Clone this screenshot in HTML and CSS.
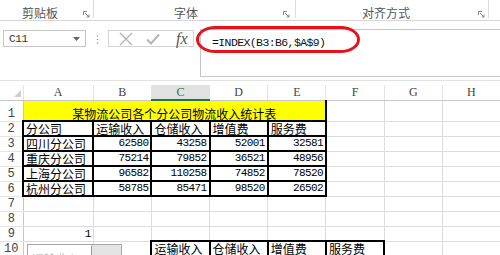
FILE: index.html
```html
<!DOCTYPE html>
<html lang="zh-CN">
<head>
    <meta charset="UTF-8">
    <title>INDEX</title>
    <link rel="stylesheet" href="styles.css">
</head>
<body>
    <div class="ribbon">
        <div class="group clip">
            <span class="label">剪贴板</span>
            <svg class="launcher" width="7" height="7" viewBox="0 0 7 7"><path d="M0.5 4V0.5H4M2 2L6 6M3.5 6H6V3.5" fill="none" stroke="#888" stroke-width="1"/></svg>
        </div>
        <div class="group font">
            <span class="label">字体</span>
            <svg class="launcher" width="7" height="7" viewBox="0 0 7 7"><path d="M0.5 4V0.5H4M2 2L6 6M3.5 6H6V3.5" fill="none" stroke="#888" stroke-width="1"/></svg>
        </div>
        <div class="group align">
            <span class="label">对齐方式</span>
            <svg class="launcher" width="7" height="7" viewBox="0 0 7 7"><path d="M0.5 4V0.5H4M2 2L6 6M3.5 6H6V3.5" fill="none" stroke="#888" stroke-width="1"/></svg>
        </div>
    </div>

    <div class="formula-bar">
        <div class="name-box">
            <span>C11</span>
            <svg width="7" height="4" viewBox="0 0 7 4"><path d="M0 0H7L3.5 4Z" fill="#666"/></svg>
        </div>
        <svg class="grip" width="3" height="9" viewBox="0 0 3 9"><circle cx="1.5" cy="1" r="0.8" fill="#999"/><circle cx="1.5" cy="4.5" r="0.8" fill="#999"/><circle cx="1.5" cy="8" r="0.8" fill="#999"/></svg>
        <div class="fx-buttons">
            <svg width="14" height="14" viewBox="0 0 14 14"><path d="M1 1L13 13M13 1L1 13" stroke="#b4b4b4" stroke-width="1.4"/></svg>
            <svg width="14" height="14" viewBox="0 0 14 14"><path d="M1 7.5L5 11.5L13 2.5" fill="none" stroke="#b4b4b4" stroke-width="2"/></svg>
            <span class="fx">fx</span>
        </div>
        <div class="formula-input">
            <span class="formula">=INDEX(B3:B6,$A$9)</span>
            <div class="mark"></div>
        </div>
    </div>

    <div class="sheet-wrap">
        <table class="sheet">
            <colgroup>
                <col class="c-head"><col class="c-a"><col class="c-n"><col class="c-n"><col class="c-n"><col class="c-n"><col class="c-n"><col class="c-n"><col class="c-n">
            </colgroup>
            <tr class="heads">
                <th class="corner"><svg width="7" height="7" viewBox="0 0 7 7"><path d="M7 0V7H0Z" fill="#cfcfcf"/></svg></th>
                <th>A</th><th>B</th><th class="sel">C</th><th>D</th><th>E</th><th>F</th><th>G</th><th>H</th>
            </tr>
            <tr class="r1">
                <th class="rn">1</th>
                <td colspan="5" class="title">某物流公司各个分公司物流收入统计表</td>
                <td></td><td></td><td></td>
            </tr>
            <tr>
                <th class="rn">2</th>
                <td class="b">分公司</td><td class="b">运输收入</td><td class="b">仓储收入</td><td class="b">增值费</td><td class="b">服务费</td>
                <td></td><td></td><td></td>
            </tr>
            <tr>
                <th class="rn">3</th>
                <td class="b">四川分公司</td><td class="b n">62580</td><td class="b n">43258</td><td class="b n">52001</td><td class="b n">32581</td>
                <td></td><td></td><td></td>
            </tr>
            <tr>
                <th class="rn">4</th>
                <td class="b">重庆分公司</td><td class="b n">75214</td><td class="b n">79852</td><td class="b n">36521</td><td class="b n">48956</td>
                <td></td><td></td><td></td>
            </tr>
            <tr>
                <th class="rn">5</th>
                <td class="b">上海分公司</td><td class="b n">96582</td><td class="b n">110258</td><td class="b n">74852</td><td class="b n">78520</td>
                <td></td><td></td><td></td>
            </tr>
            <tr>
                <th class="rn">6</th>
                <td class="b">杭州分公司</td><td class="b n">58785</td><td class="b n">85471</td><td class="b n">98520</td><td class="b n">26502</td>
                <td></td><td></td><td></td>
            </tr>
            <tr>
                <th class="rn">7</th>
                <td></td><td></td><td></td><td></td><td></td><td></td><td></td><td></td>
            </tr>
            <tr>
                <th class="rn">8</th>
                <td></td><td></td><td></td><td></td><td></td><td></td><td></td><td></td>
            </tr>
            <tr>
                <th class="rn">9</th>
                <td class="n">1</td><td></td><td></td><td></td><td></td><td></td><td></td><td></td>
            </tr>
            <tr>
                <th class="rn">10</th>
                <td></td><td></td><td class="b">运输收入</td><td class="b">仓储收入</td><td class="b">增值费</td><td class="b">服务费</td><td></td><td></td>
            </tr>
        </table>

        <!-- combo box form control sitting over A10:B10 -->
        <div class="combo">
            <div class="combo-text">运输收入</div>
            <div class="combo-btn"></div>
        </div>
    </div>
</body>
</html>
```

FILE: styles.css
```css
body {
    margin: 0;
    width: 500px;
    height: 255px;
    overflow: hidden;
    background-color: #fff;
    font-family: "Noto Sans CJK SC", sans-serif;
    color: #000;
}
.ribbon {
    display: flex;
    height: 20px;
    border-bottom: 1px solid #d6d6d6;
}
.group {
    display: flex;
    align-items: flex-start;
    height: 18px;
    font-size: 12px;
    color: #555;
    border-right: 1px solid #dcdcdc;
}
.group .label {
    line-height: 14px;
    padding-top: 6px;
}
.group .launcher {
    margin-left: auto;
    margin-top: 11px;
}
.clip {
    width: 94px;
    padding-left: 22px;
    box-sizing: border-box;
}
.clip .launcher {
    margin-right: 3px;
}
.font {
    width: 202px;
    padding-left: 80px;
    box-sizing: border-box;
}
.font .launcher {
    margin-right: 5px;
}
.align {
    width: 193px;
    padding-left: 66px;
    box-sizing: border-box;
}
.align .launcher {
    margin-right: 3px;
}
.formula-bar {
    display: flex;
    align-items: flex-start;
    height: 59px;
    border-bottom: 1px solid #e2e2e2;
}
.name-box {
    display: flex;
    align-items: center;
    justify-content: space-between;
    box-sizing: border-box;
    width: 83px;
    height: 17px;
    margin: 9px 0 0 3px;
    padding: 0 5px 0 5px;
    border: 1px solid #c6c6c6;
    font-family: "Liberation Mono", monospace;
    font-size: 11px;
    letter-spacing: -0.4px;
    color: #333;
}
.grip {
    margin: 14px 0 0 10px;
}
.fx-buttons {
    display: flex;
    align-items: center;
    box-sizing: border-box;
    width: 86px;
    height: 17px;
    margin: 9px 0 0 9px;
    padding-left: 10px;
    gap: 13px;
    border: 1px solid #d4d4d4;
}
.fx {
    font-family: "Liberation Serif", serif;
    font-style: italic;
    font-size: 16px;
    line-height: 15px;
    color: #555;
    margin-left: 3px;
}
.formula-input {
    position: relative;
    flex: 1;
    box-sizing: border-box;
    height: 48px;
    margin: 8px 0 0 6px;
    padding: 4px 0 0 11px;
    border: 1px solid #c6c6c6;
    border-right: none;
    font-size: 11.5px;
    line-height: 14px;
}
.formula {
    font-family: "Liberation Mono", monospace;
    letter-spacing: -0.6px;
    color: #111;
}
.mark {
    position: absolute;
    left: -5px;
    top: -4px;
    width: 164px;
    height: 27px;
    box-sizing: border-box;
    border: 3px solid #e4131c;
    border-radius: 20px / 14px;
}
.sheet-wrap {
    position: relative;
    margin-top: 4px;
}
.sheet {
    border-collapse: collapse;
    table-layout: fixed;
    width: 501px;
    font-size: 12px;
}
.c-head {
    width: 23px;
}
.c-a {
    width: 70px;
}
.c-n {
    width: 58px;
}
.sheet tr {
    height: 15px;
}
.sheet td {
    padding: 0 2px;
    line-height: 13px;
    border: 1px solid #dcdcdc;
    white-space: nowrap;
    overflow: hidden;
    vertical-align: bottom;
}
.sheet th {
    font-weight: normal;
    font-family: "Liberation Serif", serif;
    font-size: 12px;
    color: #444;
    padding: 0;
    line-height: 13px;
}
.heads th {
    border-right: 1px solid #e4e4e4;
    border-bottom: 1px solid #c8c8c8;
}
.heads .sel {
    background-color: #e1e1e1;
    color: #217346;
    border-bottom: 2px solid #217346;
}
.corner {
    text-align: right;
    vertical-align: bottom;
}
.corner svg {
    display: block;
    margin: 0 2px 3px auto;
}
.rn {
    border-right: 1px solid #c8c8c8;
    border-bottom: 1px solid #e4e4e4;
    font-family: "Liberation Mono", monospace !important;
    font-size: 12px !important;
    vertical-align: bottom;
}
.sheet .r1 {
    height: 21px;
}
.title {
    background-color: #ffff00;
    text-align: center;
    border-right: 2px solid #000 !important;
}
.sheet td.b {
    border: 2px solid #000;
}
.n {
    text-align: right;
    font-family: "Liberation Mono", monospace;
    font-size: 11px;
    letter-spacing: -0.6px;
}
.combo {
    position: absolute;
    left: 27px;
    top: 159px;
    display: flex;
    width: 95px;
    height: 20px;
    box-sizing: border-box;
    border: 1px solid #a6a6a6;
    background-color: #fff;
}
.combo-text {
    flex: 1;
    padding: 5px 0 0 4px;
    font-size: 12px;
    color: #c4c4c4;
}
.combo-btn {
    width: 29px;
    border-left: 1px solid #9a9a9a;
    background-color: #e4e4e4;
    border-radius: 2px;
}
```
